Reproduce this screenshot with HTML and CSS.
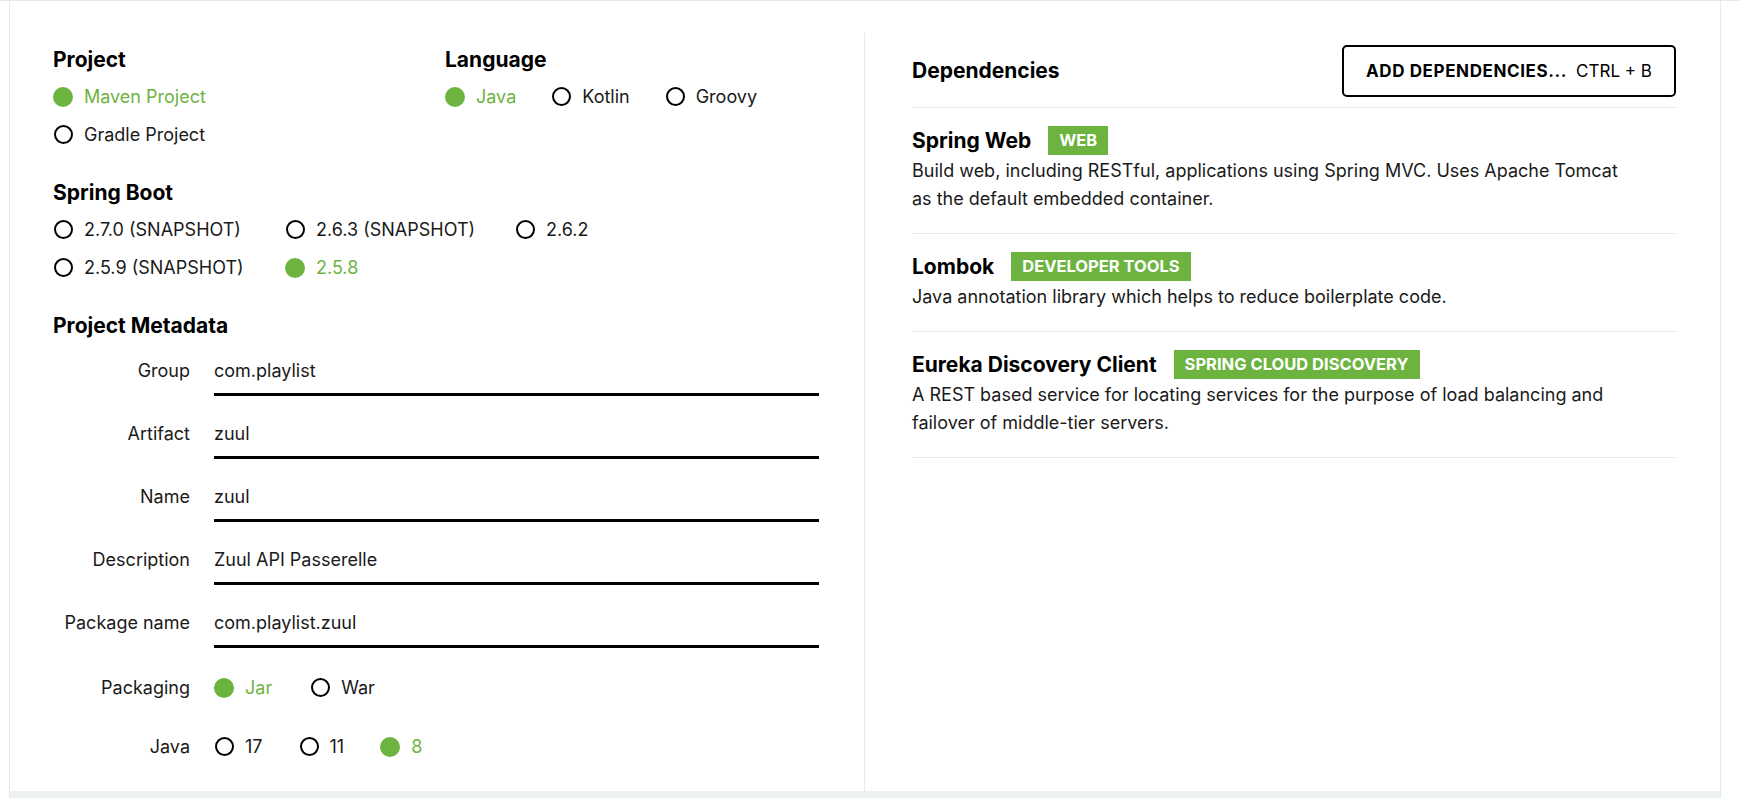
FILE: index.html
```html
<!DOCTYPE html>
<html lang="en">
<head>
<meta charset="utf-8">
<title>Spring Initializr</title>
<link rel="stylesheet" href="styles.css">
</head>
<body>
<div class="app">
  <div class="main">
    <section class="left">
      <div class="row-top">
        <div class="group group-project">
          <h2 class="heading">Project</h2>
          <div class="radio-list">
            <div class="radio-row"><span class="radio checked"></span><span class="radio-label checked">Maven Project</span></div>
            <div class="radio-row"><span class="radio"></span><span class="radio-label">Gradle Project</span></div>
          </div>
        </div>
        <div class="group group-language">
          <h2 class="heading">Language</h2>
          <div class="radio-list">
            <div class="radio-row">
              <span class="radio-item"><span class="radio checked"></span><span class="radio-label checked">Java</span></span>
              <span class="radio-item"><span class="radio"></span><span class="radio-label">Kotlin</span></span>
              <span class="radio-item"><span class="radio"></span><span class="radio-label">Groovy</span></span>
            </div>
          </div>
        </div>
      </div>

      <div class="group group-boot">
        <h2 class="heading">Spring Boot</h2>
        <div class="boot-grid">
          <span class="radio-item"><span class="radio"></span><span class="radio-label">2.7.0 (SNAPSHOT)</span></span>
          <span class="radio-item"><span class="radio"></span><span class="radio-label">2.6.3 (SNAPSHOT)</span></span>
          <span class="radio-item"><span class="radio"></span><span class="radio-label">2.6.2</span></span>
          <span class="radio-item"><span class="radio"></span><span class="radio-label">2.5.9 (SNAPSHOT)</span></span>
          <span class="radio-item"><span class="radio checked"></span><span class="radio-label checked">2.5.8</span></span>
        </div>
      </div>

      <div class="group group-meta">
        <h2 class="heading">Project Metadata</h2>
        <div class="meta-list">
          <div class="field-row"><label class="field-label">Group</label><div class="field-input">com.playlist</div></div>
          <div class="field-row"><label class="field-label">Artifact</label><div class="field-input">zuul</div></div>
          <div class="field-row"><label class="field-label">Name</label><div class="field-input">zuul</div></div>
          <div class="field-row"><label class="field-label">Description</label><div class="field-input">Zuul API Passerelle</div></div>
          <div class="field-row"><label class="field-label">Package name</label><div class="field-input">com.playlist.zuul</div></div>
          <div class="field-row radio-field packaging"><label class="field-label">Packaging</label>
            <div class="radio-row">
              <span class="radio-item"><span class="radio checked"></span><span class="radio-label checked">Jar</span></span>
              <span class="radio-item"><span class="radio"></span><span class="radio-label">War</span></span>
            </div>
          </div>
          <div class="field-row radio-field java"><label class="field-label">Java</label>
            <div class="radio-row">
              <span class="radio-item"><span class="radio"></span><span class="radio-label">17</span></span>
              <span class="radio-item"><span class="radio"></span><span class="radio-label">11</span></span>
              <span class="radio-item"><span class="radio checked"></span><span class="radio-label checked">8</span></span>
            </div>
          </div>
        </div>
      </div>
    </section>

    <section class="right">
      <div class="deps-header">
        <h2 class="heading">Dependencies</h2>
        <button class="add-btn"><strong>ADD DEPENDENCIES...</strong><span class="shortcut">CTRL + B</span></button>
      </div>
      <div class="dep">
        <div class="dep-title"><span class="dep-name">Spring Web</span><span class="badge">WEB</span></div>
        <p class="dep-desc">Build web, including RESTful, applications using Spring MVC. Uses Apache Tomcat as the default embedded container.</p>
      </div>
      <div class="dep">
        <div class="dep-title"><span class="dep-name">Lombok</span><span class="badge">DEVELOPER TOOLS</span></div>
        <p class="dep-desc">Java annotation library which helps to reduce boilerplate code.</p>
      </div>
      <div class="dep">
        <div class="dep-title"><span class="dep-name">Eureka Discovery Client</span><span class="badge">SPRING CLOUD DISCOVERY</span></div>
        <p class="dep-desc">A REST based service for locating services for the purpose of load balancing and failover of middle-tier servers.</p>
      </div>
    </section>
  </div>
  <div class="footer-strip"></div>
</div>
</body>
</html>
```

FILE: styles.css
```css
* { box-sizing: border-box; }

html, body {
  margin: 0;
  padding: 0;
  background: #fff;
}

body {
  height: 798px;
  overflow: hidden;
  border-top: 1px solid #e3e8ea;
  font-family: Inter, "Liberation Sans", sans-serif;
  color: #1a1a1a;
  font-size: 18px;
}

.app {
  margin-left: 9px;
  width: 1712px;
  height: 797px;
  border-left: 1px solid #e3ebeb;
  border-right: 1px solid #e3ebeb;
  display: flex;
  flex-direction: column;
}

.main {
  flex: 1;
  display: flex;
  min-height: 0;
}

.footer-strip {
  height: 7px;
  background: #ebf0f0;
}

.heading {
  margin: 0;
  font-size: 21px;
  line-height: 24px;
  font-weight: 700;
  color: #000;
}

/* left column */
.left {
  width: 854px;
  padding: 47px 45px 0 43px;
}

.row-top {
  display: flex;
}

.group-project {
  width: 392px;
}

.radio-list {
  margin-top: 12px;
  display: flex;
  flex-direction: column;
  gap: 13px;
}

.radio-row {
  display: flex;
  align-items: center;
  height: 25px;
}

.radio-item {
  display: inline-flex;
  align-items: center;
  height: 25px;
  margin-right: 38px;
}

.group-language .radio-item {
  margin-right: 35px;
}

.radio {
  display: inline-block;
  width: 19px;
  height: 19px;
  border: 2px solid #000;
  border-radius: 50%;
  margin-left: 1px;
  margin-right: 11px;
  flex: none;
}

.radio.checked {
  border: none;
  background: #6db33f;
  width: 20px;
  height: 20px;
  margin-left: 0;
  margin-right: 11px;
}

.radio-label {
  line-height: 24px;
  color: #1a1a1a;
}

.radio-label.checked {
  color: #6db33f;
}

.group-boot {
  margin-top: 34px;
}

.boot-grid {
  margin-top: 12px;
  display: grid;
  grid-template-columns: 232px 230px auto;
  row-gap: 13px;
}

.boot-grid .radio-item {
  margin-right: 0;
}

.group-meta {
  margin-top: 34px;
}

.meta-list {
  margin-top: 21px;
  display: flex;
  flex-direction: column;
}

.field-row {
  display: flex;
  align-items: flex-start;
  margin-bottom: 26px;
}

.field-label {
  width: 137px;
  flex: none;
  text-align: right;
  line-height: 24px;
  margin-right: 24px;
  color: #1a1a1a;
}

.field-input {
  flex: 1;
  line-height: 24px;
  padding-bottom: 10px;
  border-bottom: 3px solid #000;
  color: #1a1a1a;
}

.radio-field {
  align-items: center;
}

.packaging {
  margin-top: 1px;
  margin-bottom: 34px;
}

.java .radio-item {
  margin-right: 36px;
}

/* right column */
.right {
  flex: 1;
  margin-top: 32px;
  border-left: 1px solid #e3ebeb;
  padding: 12px 44px 0 47px;
}

.deps-header {
  display: flex;
  align-items: center;
  justify-content: space-between;
  padding-bottom: 10px;
  border-bottom: 1px solid #e3ebeb;
}

.add-btn {
  width: 334px;
  height: 52px;
  border: 2px solid #000;
  border-radius: 5px;
  background: #fff;
  font-family: Inter, "Liberation Sans", sans-serif;
  font-size: 17px;
  color: #000;
  display: flex;
  align-items: center;
  justify-content: center;
  padding: 0;
}

.add-btn strong {
  font-weight: 700;
  letter-spacing: 0.6px;
}

.shortcut {
  margin-left: 9px;
  font-weight: 400;
}

.dep {
  padding: 18px 0 20px;
  border-bottom: 1px solid #e3ebeb;
}

.dep-title {
  display: flex;
  align-items: center;
  height: 29px;
}

.dep-name {
  font-size: 21px;
  font-weight: 700;
  color: #000;
  margin-right: 17px;
}

.badge {
  display: inline-block;
  height: 29px;
  line-height: 29px;
  padding: 0 11px;
  background: #6db33f;
  color: #fff;
  font-size: 16.5px;
  font-weight: 700;
}

.dep-desc {
  margin: 2px 0 0;
  max-width: 715px;
  line-height: 28px;
  font-size: 18px;
  color: #1a1a1a;
}
```
